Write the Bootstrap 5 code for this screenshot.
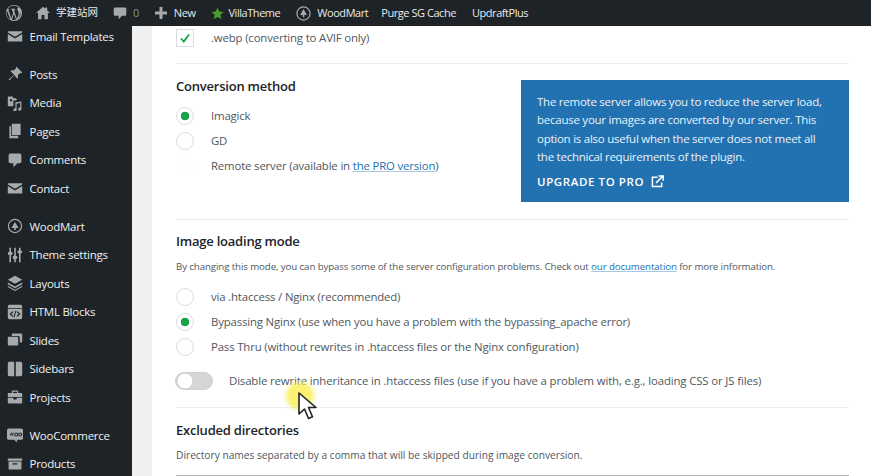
<!DOCTYPE html>
<html lang="en">
<head>
  <meta charset="UTF-8">
  <title>Converter settings</title>
  <meta name="viewport" content="width=device-width, initial-scale=1">
  <link href="https://cdn.jsdelivr.net/npm/bootstrap@5.3.3/dist/css/bootstrap.min.css" rel="stylesheet">
  <style>
    html, body { height: 476px; overflow: hidden; }
    body { background: #f0f0f1; font-family: "Open Sans", "Noto Sans CJK SC", sans-serif; font-size: 12px; color: #50575e; }
    .adminbar { height: 26px; background: #1d2327; color: #e8e9ea; font-size: 11px; letter-spacing: -.45px; }
    .adminbar svg { display: block; flex: none; }
    .bar-item { display: flex; align-items: center; white-space: nowrap; }
    .wrap-shell { height: 450px; overflow: hidden; }
    .side-menu { width: 132px; flex: none; background: #1d2327; overflow: hidden; }
    .side-list { margin: -4px 0 0; padding: 0; list-style: none; }
    .side-list li { height: 28.5px; display: flex; align-items: center; color: #eef0f1; font-size: 11.5px; letter-spacing: -.25px; white-space: nowrap; }
    .side-list li.after-gap { margin-top: 9.5px; }
    .side-list svg { width: 16px; height: 16px; margin: 0 7px 0 6.5px; flex: none; fill: #a7aaad; }
    .panel-white { margin-left: 20px; width: 719px; flex: none; background: #fff; padding: 3px 22px 0 24px; letter-spacing: -.16px; }
    .set-row { border-bottom: 1px solid #eeeeef; }
    .set-title { font-size: 13px; font-weight: 600; color: #1d2327; margin: 0; line-height: 18px; letter-spacing: -.22px; }
    .set-note { font-size: 9.7px; color: #50575e; margin: 0; line-height: 14px; letter-spacing: -.1px; }
    .set-note.note-big { font-size: 10.2px; letter-spacing: 0; }
    .opt-line { display: flex; align-items: center; height: 25px; margin: 0; font-size: 11.4px; }
    .opt-mark { flex: none; width: 35px; }
    .form-check-input.opt-box { width: 18px; height: 18px; margin: 0; float: none; border: 1px solid #dcdcde; background-color: #fff; }
    .form-check-input.opt-box:checked { border-color: #dcdcde; background-color: #fff; background-image: radial-gradient(circle, #16a34a 0 4px, transparent 4.6px); }
    .form-check-input.tick-box { border-radius: 0; }
    .form-check-input.tick-box:checked { background-image: none; }
    .tick-wrap { position: relative; display: block; width: 18px; height: 18px; }
    .tick-wrap svg { position: absolute; left: 4px; top: 4px; }
    .ghost-radio { border-color: #f8f8f8 !important; }
    .pro-box { width: 328px; height: 122px; flex: none; background: #2271b1; color: #eaf3fa; padding: 13px 16px; font-size: 11.5px; line-height: 18.4px; letter-spacing: -.25px; }
    .pro-link { display: flex; align-items: center; gap: 7px; margin-top: 6px; color: #fff; font-size: 11.5px; font-weight: 600; letter-spacing: .6px; }
    .doc-link { color: #2271b1; text-decoration: underline; text-decoration-color: #a9c7e0; }
    .form-switch .form-check-input.switch-off { width: 38px; height: 18px; margin: 0 0 0 -1px; float: none; background-color: #d6d6d6; border: 1px solid #d0d0d0; background-image: radial-gradient(circle at 9px 50%, #fff 0 7px, transparent 7.6px); }
    .mouse-glow { position: absolute; left: 286px; top: 382px; width: 28px; height: 28px; border-radius: 50%; background: rgba(248, 240, 90, .85); filter: blur(2px); }
    .mouse-arrow { position: absolute; left: 297px; top: 391px; }
    .input-edge { height: 1px; background: #b5b5b5; margin-top: 13px; }
  </style>
</head>
<body>

<div class="adminbar d-flex align-items-center">
  <div class="bar-item" style="margin-left:5px">
    <svg width="18" height="18" viewBox="0 0 20 20" fill="#a7aaad"><path d="M10 1a9 9 0 1 0 0 18 9 9 0 0 0 0-18zm0 1a8 8 0 0 1 5.4 2.1c-1-.1-1.8.6-1.9 1.6 0 .8.5 1.4.9 2.2.4.6.7 1.5.7 2.6 0 1-.3 2.1-.8 3.5l-.9 3-3.3-9.900h1V5.200H6.700v.9h.9l1.400 3.900-2 6-3.300-9.900h1V5.200H2.900A8 8 0 0 1 10 2zM2.300 7.600 6 17.500A8 8 0 0 1 2.300 7.600zM10 11l2.200 6.300a8 8 0 0 1-4.500.1zm6.800-4a8 8 0 0 1-1.600 8.400l2-5.700c.3-1 .4-1.800-.4-2.700z"/></svg>
  </div>
  <div class="bar-item" style="margin-left:13px">
    <svg width="14" height="14" viewBox="0 0 20 20" fill="#a7aaad"><path d="M10 1 0 10h3v9h5v-6h4v6h5v-9h3l-4-3.600V2h-3v1.700z"/></svg>
    <span style="margin-left:6px;font-size:10.5px;letter-spacing:0">学建站网</span>
  </div>
  <div class="bar-item" style="margin-left:15px">
    <svg width="14" height="14" viewBox="0 0 20 20" fill="#a7aaad"><path d="M3 2h14a2 2 0 0 1 2 2v8a2 2 0 0 1-2 2h-4l-5 5v-5H3a2 2 0 0 1-2-2V4a2 2 0 0 1 2-2z"/></svg>
    <span style="margin-left:6px;color:#8c8f94">0</span>
  </div>
  <div class="bar-item" style="margin-left:16px">
    <svg width="12" height="12" viewBox="0 0 12 12" fill="#a7aaad"><path d="M4.500 0h3v4.500H12v3H7.500V12h-3V7.500H0v-3h4.500z"/></svg>
    <span style="margin-left:7px">New</span>
  </div>
  <div class="bar-item" style="margin-left:16px">
    <svg width="13" height="13" viewBox="0 0 20 20" fill="#4f9a2f"><path d="m10 1 2.800 6 6.500.7-4.900 4.400 1.400 6.500L10 15.300 4.200 18.600l1.400-6.500L.7 7.700 7.200 7z"/></svg>
    <span style="margin-left:4px">VillaTheme</span>
  </div>
  <div class="bar-item" style="margin-left:16px">
    <svg width="15" height="15" viewBox="0 0 20 20"><circle cx="10" cy="10" r="8.800" fill="none" stroke="#a7aaad" stroke-width="1.600"/><path d="m10 4 4.500 8H11v3H9v-3H5.500z" fill="#a7aaad"/></svg>
    <span style="margin-left:6px">WoodMart</span>
  </div>
  <div class="bar-item" style="margin-left:13px">Purge SG Cache</div>
  <div class="bar-item" style="margin-left:16px">UpdraftPlus</div>
</div>

<div class="wrap-shell d-flex">
  <nav class="side-menu">
    <ul class="side-list">
      <li><svg viewBox="0 0 20 20"><path d="M1 4h18v1.500l-9 5.500-9-5.500zm0 3.500 9 5.500 9-5.500V17H1z"/></svg>Email Templates</li>
      <li class="after-gap"><svg viewBox="0 0 20 20"><path d="m12 1 7 7-1.500 1-1-.3-3 3c.5 2 .2 3.300-.7 4.300L9 11.200 3 18l-1-1 6.800-6L4.200 6.200c1-.9 2.300-1.200 4.300-.7l3-3-.3-1z"/></svg>Posts</li>
      <li><svg viewBox="0 0 20 20"><path d="M2 2h5l1 2h3a1 1 0 0 1 1 1v2H8v7H2a1 1 0 0 1-1-1V3a1 1 0 0 1 1-1zm3 3a1.500 1.500 0 1 0 0 3 1.500 1.500 0 0 0 0-3zm13 3v9.500a2 2 0 1 1-1.500-1.900V10L12 11v7.500a2 2 0 1 1-1.500-1.900V9z"/></svg>Media</li>
      <li><svg viewBox="0 0 20 20"><path d="M6 1h11v14H6zM3 4h2v12h9v3H3z"/></svg>Pages</li>
      <li><svg viewBox="0 0 20 20"><path d="M4 2h12a2 2 0 0 1 2 2v8a2 2 0 0 1-2 2h-3l-5 5v-5H4a2 2 0 0 1-2-2V4a2 2 0 0 1 2-2z"/></svg>Comments</li>
      <li><svg viewBox="0 0 20 20"><path d="M1 4h18v1.500l-9 5.500-9-5.500zm0 3.500 9 5.500 9-5.500V17H1z"/></svg>Contact</li>
      <li class="after-gap"><svg viewBox="0 0 20 20"><path d="M10 1a9 9 0 1 1 0 18 9 9 0 0 1 0-18zm0 1.500a7.500 7.500 0 1 0 0 15 7.500 7.500 0 0 0 0-15zM10 5l4.500 7.500H11V15H9v-2.500H5.500z"/></svg>WoodMart</li>
      <li><svg viewBox="0 0 20 20"><path d="M3 1h2v5a2 2 0 0 1 0 4v9H3v-9a2 2 0 0 1 0-4zm6 0h2v10a2 2 0 0 1 0 4v4H9v-4a2 2 0 0 1 0-4zm6 0h2v3a2 2 0 0 1 0 4v11h-2V8a2 2 0 0 1 0-4z"/></svg>Theme settings</li>
      <li><svg viewBox="0 0 20 20"><path d="m10 1 9 5-9 5-9-5zM1 9.500l9 5 9-5v2l-9 5-9-5zm0 4 9 5 9-5v1.500l-9 5-9-5z"/></svg>Layouts</li>
      <li><svg viewBox="0 0 20 20"><path d="M3 1h14a2 2 0 0 1 2 2v2H1V3a2 2 0 0 1 2-2zM1 6h18v11a2 2 0 0 1-2 2H3a2 2 0 0 1-2-2zm6 3-4 3.500L7 16l1-1-2.700-2.500L8 10zm6 0-1 1 2.700 2.500L12 15l1 1 4-3.500zm-2.500-.5L8 16.500l1.200.3 2.500-8z"/></svg>HTML Blocks</li>
      <li><svg viewBox="0 0 20 20"><path d="M7 2h11a1 1 0 0 1 1 1v9a1 1 0 0 1-1 1h-2V7a2 2 0 0 0-2-2H6V3a1 1 0 0 1 1-1zM2 6h11a1 1 0 0 1 1 1v9a1 1 0 0 1-1 1H2a1 1 0 0 1-1-1V7a1 1 0 0 1 1-1z"/></svg>Slides</li>
      <li><svg viewBox="0 0 20 20"><path d="M3 1h6v18H3a2 2 0 0 1-2-2V3a2 2 0 0 1 2-2zm8 0h6a2 2 0 0 1 2 2v14a2 2 0 0 1-2 2h-6z"/></svg>Sidebars</li>
      <li><svg viewBox="0 0 20 20"><path d="M7 2h6a1 1 0 0 1 1 1v2h4a1 1 0 0 1 1 1v4H1V6a1 1 0 0 1 1-1h4V3a1 1 0 0 1 1-1zm.500 1.500V5h5V3.500zM1 11h7v2h4v-2h7v6a1 1 0 0 1-1 1H2a1 1 0 0 1-1-1z"/></svg>Projects</li>
      <li class="after-gap"><svg viewBox="0 0 20 20"><path fill-rule="evenodd" d="M2 2h16a2 2 0 0 1 2 2v10a2 2 0 0 1-2 2h-5l-1 3-3-3H2a2 2 0 0 1-2-2V4a2 2 0 0 1 2-2zm1.500 5 1.200 5 1.300-3 1.300 3L8.500 7H7.400l-.7 3-1-3H5l-1 3-.5-3zm8 0a2.500 2.500 0 1 0 .1 5 2.500 2.500 0 0 0-.1-5zm0 1.200a1.300 1.300 0 1 1 0 2.600 1.300 1.300 0 0 1 0-2.600zm5 -1.200a2.500 2.500 0 1 0 .1 5 2.500 2.500 0 0 0-.1-5zm0 1.200a1.300 1.300 0 1 1 0 2.600 1.300 1.300 0 0 1 0-2.600z"/></svg>WooCommerce</li>
      <li><svg viewBox="0 0 20 20"><path d="M1 3h18v3H1zm1 4h16v10H2zm5 2v1.500h6V9z"/></svg>Products</li>
    </ul>
  </nav>

  <main class="panel-white">
    <div class="set-row" style="height:35px">
      <label class="d-flex align-items-center" style="font-size:11.4px">
        <span class="opt-mark">
          <span class="tick-wrap">
            <input class="form-check-input opt-box tick-box d-block" type="checkbox" checked>
            <svg width="10" height="10" viewBox="0 0 10 10"><path d="M1 5.500 3.800 8.500 9 1.500" fill="none" stroke="#16a34a" stroke-width="1.800"/></svg>
          </span>
        </span>
        .webp (converting to AVIF only)
      </label>
    </div>

    <div class="set-row d-flex justify-content-between" style="height:156px;padding-top:13px">
      <div>
        <h3 class="set-title">Conversion method</h3>
        <div style="margin-top:8px">
          <label class="opt-line"><span class="opt-mark"><input class="form-check-input opt-box d-block" type="radio" name="method" checked></span>Imagick</label>
          <label class="opt-line"><span class="opt-mark"><input class="form-check-input opt-box d-block" type="radio" name="method"></span>GD</label>
          <label class="opt-line"><span class="opt-mark"><input class="form-check-input opt-box ghost-radio d-block" type="radio" name="method" disabled></span><span>Remote server (available in <a class="doc-link" href="#">the PRO version</a>)</span></label>
        </div>
      </div>
      <aside class="pro-box" style="margin-top:3px">
        The remote server allows you to reduce the server load, because your images are converted by our server. This option is also useful when the server does not meet all the technical requirements of the plugin.
        <a class="pro-link text-decoration-none" href="#">UPGRADE TO PRO
          <svg width="13" height="13" viewBox="0 0 14 14" fill="none" stroke="#fff" stroke-width="1.600"><path d="M7 2.500H1.500v10h10V8"/><path d="M5.500 8.500 12.500 1.500M8 1h5.200v5.200" /></svg>
        </a>
      </aside>
    </div>

    <div class="set-row" style="height:188px;padding-top:12px">
      <h3 class="set-title">Image loading mode</h3>
      <p class="set-note" style="margin-top:10px">By changing this mode, you can bypass some of the server configuration problems. Check out <a class="doc-link" href="#">our documentation</a> for more information.</p>
      <div style="margin-top:10px">
        <label class="opt-line"><span class="opt-mark"><input class="form-check-input opt-box d-block" type="radio" name="mode"></span>via .htaccess / Nginx (recommended)</label>
        <label class="opt-line"><span class="opt-mark"><input class="form-check-input opt-box d-block" type="radio" name="mode" checked></span>Bypassing Nginx (use when you have a problem with the bypassing_apache error)</label>
        <label class="opt-line"><span class="opt-mark"><input class="form-check-input opt-box d-block" type="radio" name="mode"></span>Pass Thru (without rewrites in .htaccess files or the Nginx configuration)</label>
      </div>
      <label class="d-flex align-items-center form-switch p-0" style="margin-top:13px;font-size:11.4px;letter-spacing:-.135px">
        <input class="form-check-input switch-off" type="checkbox" role="switch">
        <span style="margin-left:16px">Disable rewrite inheritance in .htaccess files (use if you have a problem with, e.g., loading CSS or JS files)</span>
      </label>
    </div>

    <div style="padding-top:13px">
      <h3 class="set-title">Excluded directories</h3>
      <p class="set-note note-big" style="margin-top:9px">Directory names separated by a comma that will be skipped during image conversion.</p>
      <div class="input-edge"></div>
    </div>
  </main>
</div>

<!-- screen recorder cursor -->
<div class="mouse-glow"></div>
<svg class="mouse-arrow" width="22" height="32" viewBox="0 0 22 32"><path d="M2 2v21l5.500-5 4 9.500 4-1.800-4-9.200H19z" fill="#fff" stroke="#222" stroke-width="1.600" stroke-linejoin="round"/></svg>

<script src="https://cdn.jsdelivr.net/npm/bootstrap@5.3.3/dist/js/bootstrap.bundle.min.js"></script>
</body>
</html>
